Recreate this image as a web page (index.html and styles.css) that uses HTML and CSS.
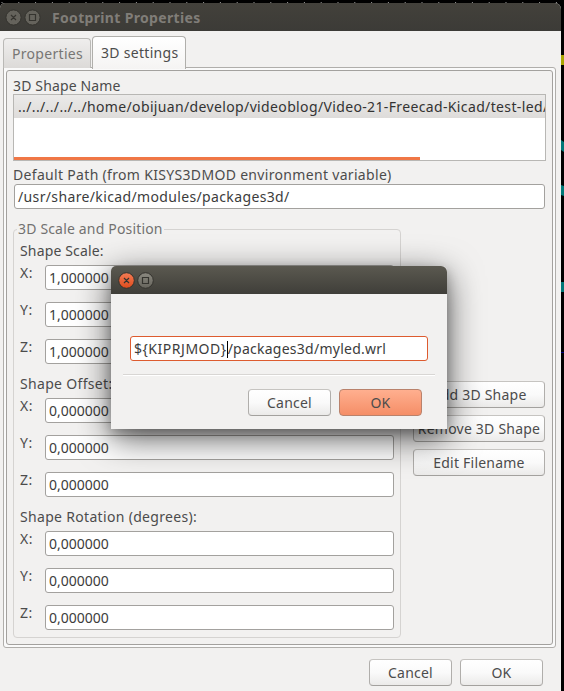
FILE: index.html
```html
<!DOCTYPE html>
<html lang="en">
<head>
<meta charset="utf-8">
<title>Footprint Properties</title>
<link rel="stylesheet" href="styles.css">
</head>
<body>
<div class="desktop">
  <svg class="canvas" width="564" height="691" viewBox="0 0 564 691">
    <path d="M1.500 2.500H564" stroke="#999" stroke-dasharray="1 15.800"/>
    <path d="M561 55h3v10h-3z" fill="#aaa500"/>
    <path d="M561 140l3 2v10l-3-2zM561 185l3 1v10l-3-1zM561 282h3v10h-3z" fill="#007878"/>
    <path d="M561 352h3v1h-3z" fill="#000080"/>
  </svg>
  <main class="window">
    <header class="titlebar">
      <svg class="ctl" width="42" height="18" viewBox="0 0 42 18">
        <g fill="#65635c" stroke="#34332e"><circle cx="8.500" cy="8.500" r="7.600"/><circle cx="27.500" cy="8.500" r="7.600"/></g>
        <path d="M6 6l5 5m0-5l-5 5M24.500 5.500h6v6h-6z" fill="none" stroke="#35342f" stroke-width="1.200"/>
      </svg>
      <h1 class="title">Footprint Properties</h1>
    </header>
    <nav class="tabs">
      <div class="tab">Properties</div>
      <div class="tab active">3D settings</div>
    </nav>
    <section class="notebook">
      <div class="panel">
        <div class="label tight">3D Shape Name</div>
        <div class="list">
          <div class="row">../../../../../home/obijuan/develop/videoblog/Video-21-Freecad-Kicad/test-led/</div>
          <div class="scroll"></div>
        </div>
        <div class="label default">Default Path (from KISYS3DMOD environment variable)</div>
        <div class="entry path">/usr/share/kicad/modules/packages3d/</div>
        <div class="columns">
          <fieldset class="group">
            <legend>3D Scale and Position</legend>
            <div class="label tight">Shape Scale:</div>
            <div class="fields">
              <div class="field"><span>X:</span><div class="entry">1,000000</div></div>
              <div class="field"><span>Y:</span><div class="entry">1,000000</div></div>
              <div class="field"><span>Z:</span><div class="entry">1,000000</div></div>
            </div>
            <div class="label">Shape Offset:</div>
            <div class="fields">
              <div class="field"><span>X:</span><div class="entry">0,000000</div></div>
              <div class="field"><span>Y:</span><div class="entry">0,000000</div></div>
              <div class="field"><span>Z:</span><div class="entry">0,000000</div></div>
            </div>
            <div class="label">Shape Rotation (degrees):</div>
            <div class="fields">
              <div class="field"><span>X:</span><div class="entry">0,000000</div></div>
              <div class="field"><span>Y:</span><div class="entry">0,000000</div></div>
              <div class="field"><span>Z:</span><div class="entry">0,000000</div></div>
            </div>
          </fieldset>
          <div class="side">
            <div class="button">Add 3D Shape</div>
            <div class="button">Remove 3D Shape</div>
            <div class="button">Edit Filename</div>
          </div>
        </div>
      </div>
    </section>
    <footer class="actions">
      <div class="button">Cancel</div>
      <div class="button">OK</div>
    </footer>
  </main>
  <div class="dialog">
    <header class="titlebar bright">
      <svg class="ctl" width="42" height="18" viewBox="0 0 42 18">
        <defs>
          <linearGradient id="close" x2="0" y2="1"><stop stop-color="#f47c55"/><stop offset="1" stop-color="#df4b1c"/></linearGradient>
          <linearGradient id="max" x2="0" y2="1"><stop stop-color="#8b8980"/><stop offset="1" stop-color="#66645c"/></linearGradient>
        </defs>
        <g stroke="#34332e"><circle cx="9.500" cy="8.500" r="7.800" fill="url(#close)"/><circle cx="28.500" cy="8.500" r="7.800" fill="url(#max)"/></g>
        <path d="M7 6l5 5m0-5l-5 5M25.500 5.500h6v6h-6z" fill="none" stroke="#35342f" stroke-width="1.200"/>
      </svg>
    </header>
    <div class="dialog-body">
      <div class="entry focus"><span class="variable">${KIPRJMOD}</span><i class="caret"></i><span class="rest">/packages3d/myled.wrl</span></div>
      <div class="separator"></div>
      <div class="dialog-actions">
        <div class="button">Cancel</div>
        <div class="button primary">OK</div>
      </div>
    </div>
  </div>
</div>
</body>
</html>
```
FILE: styles.css
```css
* { box-sizing: border-box; }
body {
  margin: 0;
  font: 14px/20px "Noto Sans", sans-serif;
  color: #4c4c4c;
  background: #000;
}
.desktop {
  position: relative;
  width: 564px;
  height: 691px;
  padding-top: 3px;
  overflow: hidden;
}
.canvas { position: absolute; left: 0; top: 0; }
.window {
  position: relative;
  width: 561px;
  height: 688px;
  background: #f2f1f0;
  border-radius: 5px 6px 0 0;
}
.titlebar {
  display: flex;
  height: 28px;
  padding: 6px 0 0 5px;
  border-radius: 5px 6px 0 0;
  background: linear-gradient(#43413b, #3c3b37);
}
.ctl { flex: none; }
.title {
  margin: -1px 0 0 5px;
  font: bold 14px/20px "Noto Sans", sans-serif;
  letter-spacing: .33px;
  color: #807d78;
  white-space: nowrap;
}
.tabs {
  display: flex;
  align-items: flex-end;
  gap: 1px;
  height: 37px;
  padding-left: 3px;
}
.tab {
  width: 88px;
  height: 30px;
  padding: 5px 0 0 8px;
  border: 1px solid #bab9b6;
  border-bottom: 0;
  border-radius: 4px 4px 0 0;
  background: linear-gradient(#efeeed, #dcdad8);
  color: #777674;
  letter-spacing: .3px;
  white-space: nowrap;
}
.tab.active {
  position: relative;
  z-index: 1;
  width: 94px;
  height: 33px;
  margin-bottom: -1px;
  padding: 6px 0 0 8px;
  border-color: #b0afab;
  background: linear-gradient(#fff, #f5f4f3);
  color: #4c4c4c;
}
.notebook {
  width: 553px;
  height: 581px;
  margin: -1px 0 0 3px;
  padding: 2px;
  border: 1px solid #b0aeab;
  border-radius: 0 3px 3px 3px;
  background: #fafafa;
}
.panel {
  height: 575px;
  padding: 5px 6px 0;
  border: 1px solid #a3a19e;
  border-radius: 3px;
  background: #f2f1f0;
}
.label { height: 20px; letter-spacing: .32px; white-space: nowrap; }
.label.tight { letter-spacing: .15px; }
.list {
  display: flex;
  flex-direction: column;
  width: 533px;
  height: 67px;
  margin-top: -2px;
  border: 1px solid #b8b7b4;
  background: #fff;
  overflow: hidden;
}
.row {
  height: 23px;
  padding: 2px 0 0 4px;
  background: linear-gradient(#ebeae9, #dedcda);
  color: #333;
  letter-spacing: .36px;
  white-space: nowrap;
  overflow: hidden;
}
.scroll { width: 406px; height: 3px; margin-top: auto; background: #f07746; }
.label.default { height: 19px; margin-top: 4px; }
.entry {
  display: flex;
  align-items: center;
  height: 25px;
  padding: 1px 0 0 3px;
  border: 1px solid #a3a19e;
  border-radius: 3px;
  background: #fff;
  color: #3c3c3c;
  white-space: nowrap;
}
.entry.path { width: 531px; margin-left: 1px; letter-spacing: .36px; }
.columns { display: flex; gap: 12px; margin-top: 10px; }
.group {
  width: 388px;
  height: 419px;
  min-width: 0;
  margin: 0;
  padding: 2px 6px 0;
  border: 1px solid #d5d3d1;
  border-radius: 4px;
}
.group legend {
  height: 20px;
  margin-left: -3px;
  padding: 0 1px;
  color: #727170;
  letter-spacing: .17px;
  white-space: nowrap;
}
.fields { display: grid; gap: 12px; margin: 4px 0 10px; }
.field { display: flex; height: 25px; }
.field span { width: 25px; margin-top: -2px; letter-spacing: .5px; }
.field .entry { width: 349px; }
.side { display: grid; align-content: start; gap: 7px; padding-top: 162px; }
.button {
  display: flex;
  align-items: center;
  justify-content: center;
  width: 83px;
  height: 27px;
  border: 1px solid #b0aeab;
  border-top-color: #c6c4c1;
  border-bottom-color: #a3a19e;
  border-radius: 4px;
  background: linear-gradient(#fff, #fafafa 50%, #ebeae9);
  letter-spacing: .22px;
  white-space: nowrap;
}
.side .button { width: 132px; }
.actions { display: flex; gap: 8px; margin: 11px 0 0 369px; }
.dialog {
  position: absolute;
  left: 111px;
  top: 266px;
  width: 336px;
  height: 163px;
  border-radius: 5px 5px 0 0;
  background: #f2f1f0;
  box-shadow: 0 9px 34px rgba(0, 0, 0, .66), 0 4px 12px rgba(0, 0, 0, .22);
}
.bright { background: linear-gradient(#5b5950, #3f3e39); padding-left: 6px; }
.dialog-body { padding: 42px 12px 0; }
.entry.focus { width: 298px; margin-left: 7px; border-color: #dd5b2f; }
.variable { letter-spacing: .52px; }
.rest { letter-spacing: .25px; }
.caret { width: 1px; height: 17px; background: #000; }
.separator { height: 2px; margin-top: 13px; border-top: 1px solid #d8d6d4; background: #fff; }
.dialog-actions { display: flex; justify-content: flex-end; gap: 8px; padding-right: 13px; margin-top: 13px; }
.primary { border-color: #b9826c; background: linear-gradient(#ffaf8f, #f58e67); }
```
